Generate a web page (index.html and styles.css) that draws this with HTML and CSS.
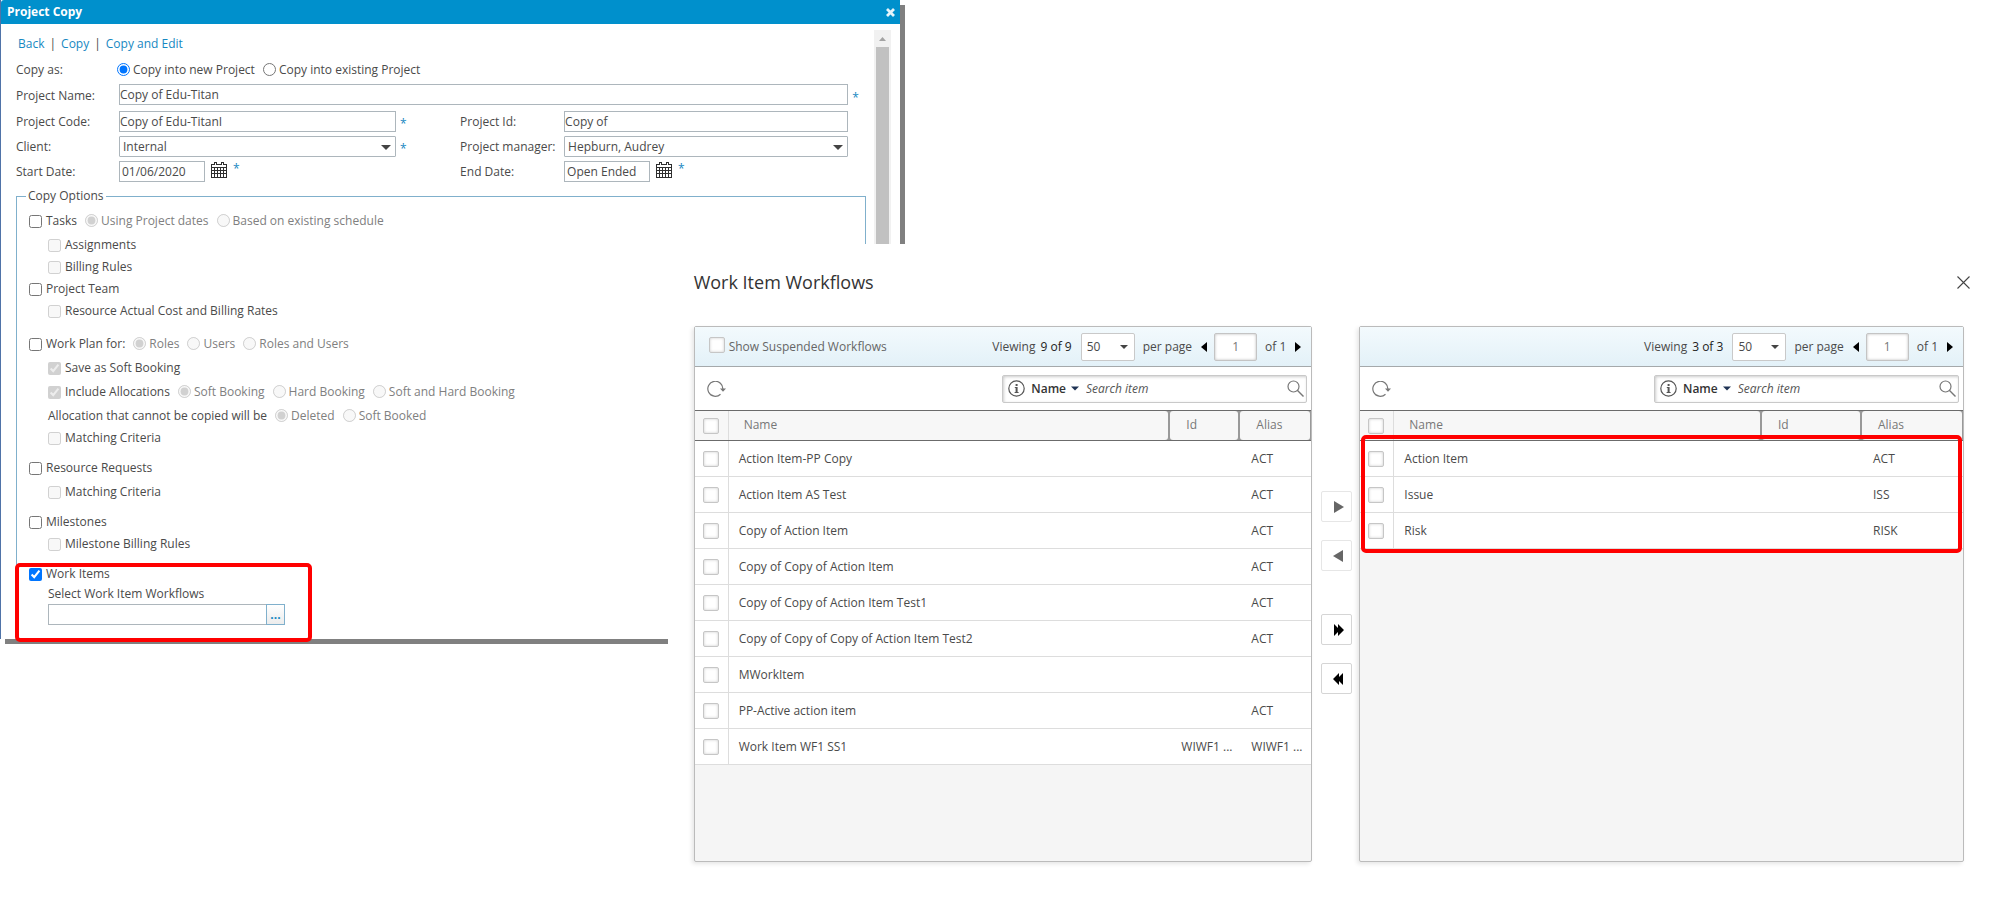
FILE: index.html
```html
<!DOCTYPE html>
<html lang="en">
<head>
<meta charset="utf-8">
<title>Project Copy</title>
<link rel="stylesheet" href="styles.css">
</head>
<body>
<svg class="defs" aria-hidden="true">
  <symbol id="i-calendar" viewBox="0 0 16 16">
    <path d="M0 2h16v14H0z" fill="#2e2e2e"/>
    <path d="M1 3h14v2H1z" fill="#fff"/>
    <path d="M1 6h2v2H1zM4 6h2v2H4zM7 6h2v2H7zM10 6h2v2h-2zM13 6h2v2h-2zM1 9h2v2H1zM4 9h2v2H4zM7 9h2v2H7zM10 9h2v2h-2zM13 9h2v2h-2zM1 12h2v3H1zM4 12h2v3H4zM7 12h2v3H7zM10 12h2v3h-2zM13 12h2v3h-2z" fill="#fff"/>
    <path d="M3 0h3v3H3zM10 0h3v3h-3z" fill="#2e2e2e"/>
    <path d="M4 1h1v2H4zM11 1h1v2h-1z" fill="#fff"/>
  </symbol>
  <symbol id="i-refresh" viewBox="0 0 19 17">
    <path d="M13.500 13.200A7.500 7.500 0 1 1 15.800 8.500" fill="none" stroke="#777" stroke-width="1.200"/>
    <path d="M13 7.500h6L16 10.800z" fill="#777"/>
  </symbol>
  <symbol id="i-info" viewBox="0 0 17 17">
    <circle cx="8.500" cy="8.500" r="7.700" fill="none" stroke="#555" stroke-width="1.200"/>
    <path d="M7.600 4h2v2h-2zM6.800 7h2.800v5h1v1H6.600v-1h1V8h-.8z" fill="#555"/>
  </symbol>
  <symbol id="i-search" viewBox="0 0 17 17">
    <circle cx="6.500" cy="6.500" r="5.500" fill="none" stroke="#777" stroke-width="1.200"/>
    <path d="M10.300 10.300l6.200 6.200" stroke="#777" stroke-width="1.400"/>
  </symbol>
  <symbol id="i-close" viewBox="0 0 13 13">
    <path d="M.5.5l12 12M12.500.5l-12 12" stroke="#444" stroke-width="1.100"/>
  </symbol>
  <symbol id="i-cross" viewBox="0 0 9 9">
    <path d="M1 1l7 7M8 1L1 8" stroke="#e6f4fa" stroke-width="2.800"/>
  </symbol>
  <symbol id="i-prev" viewBox="0 0 6 10"><path d="M6 0v10L0 5z"/></symbol>
  <symbol id="i-next" viewBox="0 0 6 10"><path d="M0 0v10l6-5z"/></symbol>
  <symbol id="i-down" viewBox="0 0 10 5"><path d="M0 0h10L5 5z"/></symbol>
  <symbol id="i-right" viewBox="0 0 11 12"><path d="M1 0v12l10-6z"/></symbol>
  <symbol id="i-left" viewBox="0 0 11 12"><path d="M10 0v12L0 6z"/></symbol>
  <symbol id="i-right2" viewBox="0 0 11 12"><path d="M1 0v12l4-4v4l6-6-6-6v4z"/></symbol>
  <symbol id="i-left2" viewBox="0 0 11 12"><path d="M10 0v12L6 8v4L0 6l6-6v4z"/></symbol>
</svg>

<main class="desktop">
<section class="copy-window" aria-label="Project Copy">
  <header class="titlebar">
    <h1>Project Copy</h1>
    <button class="plain" type="button" aria-label="Close"><svg width="9" height="9"><use href="#i-cross"/></svg></button>
  </header>
  <div class="copy-body">
    <form class="copy-form">
      <nav class="actions"><a href="#">Back</a><span>|</span><a href="#">Copy</a><span>|</span><a href="#">Copy and Edit</a></nav>

      <div class="fields">
        <span>Copy as:</span>
        <div class="radios span-all">
          <label class="radio"><input type="radio" name="target" checked>Copy into new Project</label>
          <label class="radio"><input type="radio" name="target">Copy into existing Project</label>
        </div>

        <label for="pname">Project Name:</label>
        <input class="box wide" id="pname" type="text" value="Copy of Edu-Titan"><span class="star">*</span>

        <label for="pcode">Project Code:</label>
        <input class="box" id="pcode" type="text" value="Copy of Edu-TitanI"><span class="star">*</span>
        <label for="pid">Project Id:</label>
        <input class="box" id="pid" type="text" value="Copy of"><span></span>

        <label for="client">Client:</label>
        <div class="dropdown"><select class="box" id="client"><option>Internal</option></select><svg width="10" height="5"><use href="#i-down"/></svg></div><span class="star">*</span>
        <label for="pm">Project manager:</label>
        <div class="dropdown"><select class="box" id="pm"><option>Hepburn, Audrey</option></select><svg width="10" height="5"><use href="#i-down"/></svg></div><span></span>

        <label for="start">Start Date:</label>
        <div class="date"><input class="box" id="start" type="text" value="01/06/2020"><button class="plain" type="button" aria-label="Pick start date"><svg width="16" height="16"><use href="#i-calendar"/></svg></button><span class="star">*</span></div><span></span>
        <label for="end">End Date:</label>
        <div class="date"><input class="box" id="end" type="text" value="Open Ended"><button class="plain" type="button" aria-label="Pick end date"><svg width="16" height="16"><use href="#i-calendar"/></svg></button><span class="star">*</span></div><span></span>
      </div>

      <fieldset class="options">
        <legend>Copy Options</legend>
        <div class="row">
          <label class="tick"><input type="checkbox">Tasks</label>
          <label class="radio off"><input type="radio" name="tasks" checked disabled>Using Project dates</label>
          <label class="radio off"><input type="radio" name="tasks" disabled>Based on existing schedule</label>
        </div>
        <div class="row sub near"><label class="tick"><input type="checkbox" disabled>Assignments</label></div>
        <div class="row sub tight"><label class="tick"><input type="checkbox" disabled>Billing Rules</label></div>
        <div class="row tight"><label class="tick"><input type="checkbox">Project Team</label></div>
        <div class="row sub tight"><label class="tick"><input type="checkbox" disabled>Resource Actual Cost and Billing Rates</label></div>
        <div class="row far">
          <label class="tick"><input type="checkbox">Work Plan for:</label>
          <label class="radio off"><input type="radio" name="plan" checked disabled>Roles</label>
          <label class="radio off"><input type="radio" name="plan" disabled>Users</label>
          <label class="radio off"><input type="radio" name="plan" disabled>Roles and Users</label>
        </div>
        <div class="row sub near"><label class="tick"><input type="checkbox" checked disabled>Save as Soft Booking</label></div>
        <div class="row sub near">
          <label class="tick"><input type="checkbox" checked disabled>Include Allocations</label>
          <label class="radio off"><input type="radio" name="alloc" checked disabled>Soft Booking</label>
          <label class="radio off"><input type="radio" name="alloc" disabled>Hard Booking</label>
          <label class="radio off"><input type="radio" name="alloc" disabled>Soft and Hard Booking</label>
        </div>
        <div class="row sub near">
          <span>Allocation that cannot be copied will be</span>
          <label class="radio off"><input type="radio" name="lost" checked disabled>Deleted</label>
          <label class="radio off"><input type="radio" name="lost" disabled>Soft Booked</label>
        </div>
        <div class="row sub tight"><label class="tick"><input type="checkbox" disabled>Matching Criteria</label></div>
        <div class="row group"><label class="tick"><input type="checkbox">Resource Requests</label></div>
        <div class="row sub near"><label class="tick"><input type="checkbox" disabled>Matching Criteria</label></div>
        <div class="row group"><label class="tick"><input type="checkbox">Milestones</label></div>
        <div class="row sub tight"><label class="tick"><input type="checkbox" disabled>Milestone Billing Rules</label></div>
        <div class="row group"><label class="tick"><input type="checkbox" checked>Work Items</label></div>
        <div class="row sub"><label for="wf">Select Work Item Workflows</label></div>
        <div class="picker"><input class="box" id="wf" type="text"><button type="button" aria-label="Browse workflows">...</button></div>
      </fieldset>
    </form>
    <div class="scrollbar" aria-hidden="true">
      <svg width="7" height="4"><path d="M0 4h7L3.500 0z" fill="#a3a3a3"/></svg>
      <div class="thumb"></div>
    </div>
  </div>
  <div class="mark mark-items"></div>
</section>

<section class="flow-window" aria-label="Work Item Workflows">
  <header class="flow-head">
    <h2>Work Item Workflows</h2>
    <button class="plain" type="button" aria-label="Close"><svg width="13" height="13"><use href="#i-close"/></svg></button>
  </header>
  <div class="transfer">
    <section class="panel">
      <div class="pager">
        <label class="suspended"><input class="check" type="checkbox">Show Suspended Workflows</label>
        <span>Viewing</span><span class="count">9 of 9</span>
        <div class="dropdown size"><select aria-label="Items per page"><option>50</option></select><svg width="8" height="4"><use href="#i-down"/></svg></div>
        <span class="per">per page</span>
        <button class="plain prev" type="button" aria-label="Previous page"><svg width="6" height="10"><use href="#i-prev"/></svg></button>
        <input class="page" type="text" value="1" aria-label="Page">
        <span class="of">of 1</span>
        <button class="plain next" type="button" aria-label="Next page"><svg width="6" height="10"><use href="#i-next"/></svg></button>
      </div>
      <div class="toolbar">
        <button class="plain" type="button" aria-label="Refresh"><svg width="19" height="17"><use href="#i-refresh"/></svg></button>
        <div class="search">
          <svg width="17" height="17"><use href="#i-info"/></svg>
          <button class="plain by" type="button">Name<svg width="8" height="5" fill="#1f3354"><use href="#i-down"/></svg></button>
          <input type="text" placeholder="Search item" aria-label="Search item">
          <button class="plain" type="button" aria-label="Search"><svg width="17" height="17"><use href="#i-search"/></svg></button>
        </div>
      </div>
      <table class="grid">
        <colgroup><col class="c-check"><col><col class="c-id"><col class="c-alias"></colgroup>
        <thead><tr><th class="pick"><div><input class="check" type="checkbox" aria-label="Select all"></div></th><th class="name"><div>Name</div></th><th><div>Id</div></th><th class="last"><div>Alias</div></th></tr></thead>
        <tbody>
          <tr><td class="pick"><input class="check" type="checkbox" aria-label="Select row"></td><td>Action Item-PP Copy</td><td></td><td>ACT</td></tr>
          <tr><td class="pick"><input class="check" type="checkbox" aria-label="Select row"></td><td>Action Item AS Test</td><td></td><td>ACT</td></tr>
          <tr><td class="pick"><input class="check" type="checkbox" aria-label="Select row"></td><td>Copy of Action Item</td><td></td><td>ACT</td></tr>
          <tr><td class="pick"><input class="check" type="checkbox" aria-label="Select row"></td><td>Copy of Copy of Action Item</td><td></td><td>ACT</td></tr>
          <tr><td class="pick"><input class="check" type="checkbox" aria-label="Select row"></td><td>Copy of Copy of Action Item Test1</td><td></td><td>ACT</td></tr>
          <tr><td class="pick"><input class="check" type="checkbox" aria-label="Select row"></td><td>Copy of Copy of Copy of Action Item Test2</td><td></td><td>ACT</td></tr>
          <tr><td class="pick"><input class="check" type="checkbox" aria-label="Select row"></td><td>MWorkItem</td><td></td><td></td></tr>
          <tr><td class="pick"><input class="check" type="checkbox" aria-label="Select row"></td><td>PP-Active action item</td><td></td><td>ACT</td></tr>
          <tr><td class="pick"><input class="check" type="checkbox" aria-label="Select row"></td><td>Work Item WF1 SS1</td><td>WIWF1 ...</td><td>WIWF1 ...</td></tr>
        </tbody>
      </table>
    </section>

    <div class="movers">
      <button class="idle" type="button" aria-label="Add"><svg width="11" height="12"><use href="#i-right"/></svg></button>
      <button class="idle" type="button" aria-label="Remove"><svg width="11" height="12"><use href="#i-left"/></svg></button>
      <button class="all" type="button" aria-label="Add all"><svg width="11" height="12"><use href="#i-right2"/></svg></button>
      <button type="button" aria-label="Remove all"><svg width="11" height="12"><use href="#i-left2"/></svg></button>
    </div>

    <section class="panel chosen">
      <div class="pager">
        <span class="push">Viewing</span><span class="count">3 of 3</span>
        <div class="dropdown size"><select aria-label="Items per page"><option>50</option></select><svg width="8" height="4"><use href="#i-down"/></svg></div>
        <span class="per">per page</span>
        <button class="plain prev" type="button" aria-label="Previous page"><svg width="6" height="10"><use href="#i-prev"/></svg></button>
        <input class="page" type="text" value="1" aria-label="Page">
        <span class="of">of 1</span>
        <button class="plain next" type="button" aria-label="Next page"><svg width="6" height="10"><use href="#i-next"/></svg></button>
      </div>
      <div class="toolbar">
        <button class="plain" type="button" aria-label="Refresh"><svg width="19" height="17"><use href="#i-refresh"/></svg></button>
        <div class="search">
          <svg width="17" height="17"><use href="#i-info"/></svg>
          <button class="plain by" type="button">Name<svg width="8" height="5" fill="#1f3354"><use href="#i-down"/></svg></button>
          <input type="text" placeholder="Search item" aria-label="Search item">
          <button class="plain" type="button" aria-label="Search"><svg width="17" height="17"><use href="#i-search"/></svg></button>
        </div>
      </div>
      <table class="grid">
        <colgroup><col class="c-check"><col><col class="c-id"><col class="c-alias"></colgroup>
        <thead><tr><th class="pick"><div><input class="check" type="checkbox" aria-label="Select all"></div></th><th class="name"><div>Name</div></th><th><div>Id</div></th><th class="last"><div>Alias</div></th></tr></thead>
        <tbody>
          <tr><td class="pick"><input class="check" type="checkbox" aria-label="Select row"></td><td>Action Item</td><td></td><td>ACT</td></tr>
          <tr><td class="pick"><input class="check" type="checkbox" aria-label="Select row"></td><td>Issue</td><td></td><td>ISS</td></tr>
          <tr><td class="pick"><input class="check" type="checkbox" aria-label="Select row"></td><td>Risk</td><td></td><td>RISK</td></tr>
        </tbody>
      </table>
      <div class="mark mark-chosen"></div>
    </section>
  </div>
</section>
</main>
</body>
</html>
```
FILE: styles.css
```css
* { box-sizing: border-box; }

body {
  margin: 0;
  background: #fff;
  color: #4a4a4a;
  font: 12px/20px "Open Sans", "Noto Sans", sans-serif;
}

input, select, button { font: inherit; color: inherit; margin: 0; }
svg { display: block; flex: none; }
.defs { position: absolute; width: 0; height: 0; }

.plain { border: 0; background: none; padding: 0; }

.desktop { position: relative; min-height: 100vh; overflow: hidden; }

/* Project Copy window */
.copy-window {
  position: absolute;
  top: 0;
  left: 0;
  width: 44.9%;
  background: #fff;
  border-left: 1px solid #4f73a8;
  box-shadow: 5px 5px 0 #808080;
}

.titlebar {
  display: flex;
  align-items: center;
  justify-content: space-between;
  height: 24px;
  padding: 0 5px 0 6px;
  background: #0090cc;
  color: #fff;
  border-top-left-radius: 3px;
}
.titlebar h1 { margin: 0; font-size: 12px; font-weight: 700; }

.copy-body { display: flex; gap: 8px; padding: 6px 9px 0 15px; }
.copy-form { flex: 1; min-width: 0; padding-top: 4px; }

.actions { display: flex; gap: 5px; padding-left: 2px; margin-bottom: 6px; }
.actions a { color: #1788c2; text-decoration: none; }

.fields {
  display: grid;
  grid-template-columns: 103px minmax(0, 277fr) 64px 104px minmax(0, 284fr) 18px;
  row-gap: 4px;
  align-items: center;
}
.span-all { grid-column: 2 / -1; }
.radios { display: flex; gap: 8px; margin-left: -2px; }

.box {
  width: 100%;
  height: 21px;
  padding: 0;
  border: 1px solid #adb6bc;
  border-radius: 0;
  background: #fff;
  outline: 0;
}
.wide { grid-column: 2 / 6; margin-bottom: 2px; }
.star { padding: 4px 0 0 4px; color: #1788c2; line-height: 16px; }

.dropdown { position: relative; }
.dropdown select { appearance: none; padding: 0 3px; border-radius: 1px; outline: 0; display: block; }
.dropdown svg { position: absolute; right: 5px; top: 50%; margin-top: -2px; pointer-events: none; fill: #444; }

.date { display: flex; gap: 6px; }
.date .box { width: 86px; padding: 0 2px; }
.date .plain { align-self: flex-start; padding-top: 1px; }
.date .star { padding: 0; }

.radio, .tick { display: flex; align-items: center; }
.radio { gap: 3px; }
.radio input { width: 13px; height: 13px; margin-bottom: 2px; }
.tick { gap: 4px; }
.tick input { width: 13px; height: 13px; }
.off { color: #808080; }

.options {
  min-width: 0;
  margin: 4px 0 0;
  padding: 5px 9px 14px;
  border: 1px solid #80b0cc;
  border-bottom: 0;
}
.options legend { padding: 0 2px; }
.row { display: flex; align-items: center; gap: 8px; height: 20px; padding-left: 3px; }
.sub { padding-left: 22px; }
.tight { margin-top: 2px; }
.near { margin-top: 4px; }
.group { margin-top: 10px; }
.far { margin-top: 13px; }

.picker { display: flex; width: 259px; padding-left: 22px; }
.picker .box { flex: 1; min-width: 0; border-right: 0; }
.picker button {
  width: 19px;
  height: 21px;
  padding: 0;
  border: 1px solid #80b0cc;
  background: linear-gradient(#fff, #ececec);
  color: #1788c2;
  font-weight: 700;
  line-height: 19px;
}

.scrollbar {
  display: flex;
  flex-direction: column;
  align-items: center;
  width: 17px;
  padding-top: 7px;
  gap: 6px;
  background: #f1f1f1;
}
.thumb { flex: 1; width: 13px; background: #c1c1c1; }

/* Red highlight frames */
.mark { position: absolute; border: 4px solid #f00; border-radius: 5px; pointer-events: none; }
.mark-items { left: 14px; bottom: -3px; width: 297px; height: 79px; }
.mark-chosen { left: 1px; right: 1px; top: 108px; height: 118px; }

/* Work Item Workflows window */
.flow-window {
  position: absolute;
  top: 244px;
  left: 33.3%;
  right: 0;
  bottom: 0;
  display: flex;
  flex-direction: column;
  padding: 23px 35px 60px 26px;
  background: #fff;
}
.flow-head { display: flex; justify-content: space-between; align-items: center; height: 30px; margin-bottom: 29px; }
.flow-head h2 { margin: 0; font-size: 18px; font-weight: 400; color: #333; }

.transfer { flex: 1; display: grid; grid-template-columns: 619fr 47px 605fr; margin-right: 6px; }

.panel {
  position: relative;
  min-width: 0;
  border: 1px solid #bbb;
  border-radius: 2px;
  background: #f5f5f5;
  box-shadow: -2px 2px 4px rgba(0, 0, 0, .1);
}

.pager {
  display: flex;
  align-items: center;
  height: 40px;
  padding: 0 10px 0 14px;
  border-bottom: 1px solid #a5a9ab;
  background: linear-gradient(#f3fafd, #e3f1f8);
}
.suspended { display: flex; align-items: center; gap: 4px; margin-right: auto; color: #666; }
.suspended .check { margin-bottom: 4px; }
.push { margin-left: auto; }
.count { margin-left: 5px; color: #222; }
.size { width: 54px; height: 28px; margin-left: 9px; }
.size select { width: 100%; height: 100%; padding: 0 5px; border: 1px solid #c9c9c9; border-radius: 2px; background: #fff; }
.size svg { right: 7px; }
.per { margin-left: 8px; }
.prev { margin-left: 9px; }
.page {
  width: 43px;
  height: 28px;
  margin-left: 7px;
  padding: 0;
  border: 1px solid #c4c4c4;
  border-radius: 2px;
  box-shadow: inset 0 0 3px #bbb;
  text-align: center;
  color: #777;
}
.of { margin-left: 8px; }
.next { margin-left: 9px; }

.toolbar {
  display: flex;
  align-items: center;
  justify-content: space-between;
  height: 43px;
  padding: 0 4px 0 12px;
  background: #fff;
}
.toolbar > .plain { padding-top: 2px; }
.search {
  display: flex;
  align-items: center;
  width: 305px;
  height: 28px;
  padding: 0 2px 0 5px;
  border: 1px solid #c9c9c9;
  border-radius: 2px;
  box-shadow: inset 1px 1px 3px #ccc;
}
.by { display: flex; align-items: center; gap: 5px; margin: 0 7px 0 6px; font-weight: 600; color: #333; }
.search input { flex: 1; min-width: 0; padding: 0; border: 0; outline: 0; background: none; font-style: italic; }
.search input::placeholder { color: #555; opacity: 1; }

.check {
  appearance: none;
  display: block;
  width: 16px;
  height: 16px;
  border: 1px solid #c6c6c6;
  border-radius: 2px;
  background: #fff;
  box-shadow: inset 0 0 3px #ccc;
}

.grid { width: 100%; table-layout: fixed; border-collapse: separate; border-spacing: 0; background: #fff; }
.c-check { width: 34px; }
.c-id { width: 70px; }
.c-alias { width: 73px; }
.chosen .c-id { width: 100px; }
.chosen .c-alias { width: 103px; }

.grid th {
  padding: 0;
  border-top: 1px solid #6b6b6b;
  border-bottom: 1px solid #6b6b6b;
  background: #999;
  color: #777;
  font-weight: 400;
  text-align: left;
}
.grid th div {
  height: 29px;
  margin-left: 2px;
  padding-left: 16px;
  border-radius: 3px;
  background: #f7f7f7;
  line-height: 28px;
}
.grid th.name div { margin-left: 0; padding-left: 15px; border-radius: 0 3px 3px 0; }
.grid th.last div { margin-right: 1px; }
.grid th.pick div { margin: 0; padding: 7px 8px; border-radius: 0; border-right: 1px solid #ddd; }

.grid td {
  height: 36px;
  padding: 0;
  border-bottom: 1px solid #ddd;
  line-height: 20px;
  white-space: nowrap;
}
.grid td + td { padding-left: 10px; }
.grid td + td + td { padding-left: 13px; }
.grid td.pick { padding: 0 8px; border-right: 1px solid #ddd; }

.movers { display: flex; flex-direction: column; gap: 18px; padding: 165px 7px 0 9px; }
.movers button {
  display: flex;
  align-items: center;
  justify-content: center;
  width: 31px;
  height: 31px;
  padding: 0 0 0 3px;
  border: 1px solid #d5d5d5;
  border-radius: 2px;
  background: #fff;
}
.movers .idle { border-color: #e6e6e6; fill: #666; }
.movers .all { margin-top: 25px; }
```
